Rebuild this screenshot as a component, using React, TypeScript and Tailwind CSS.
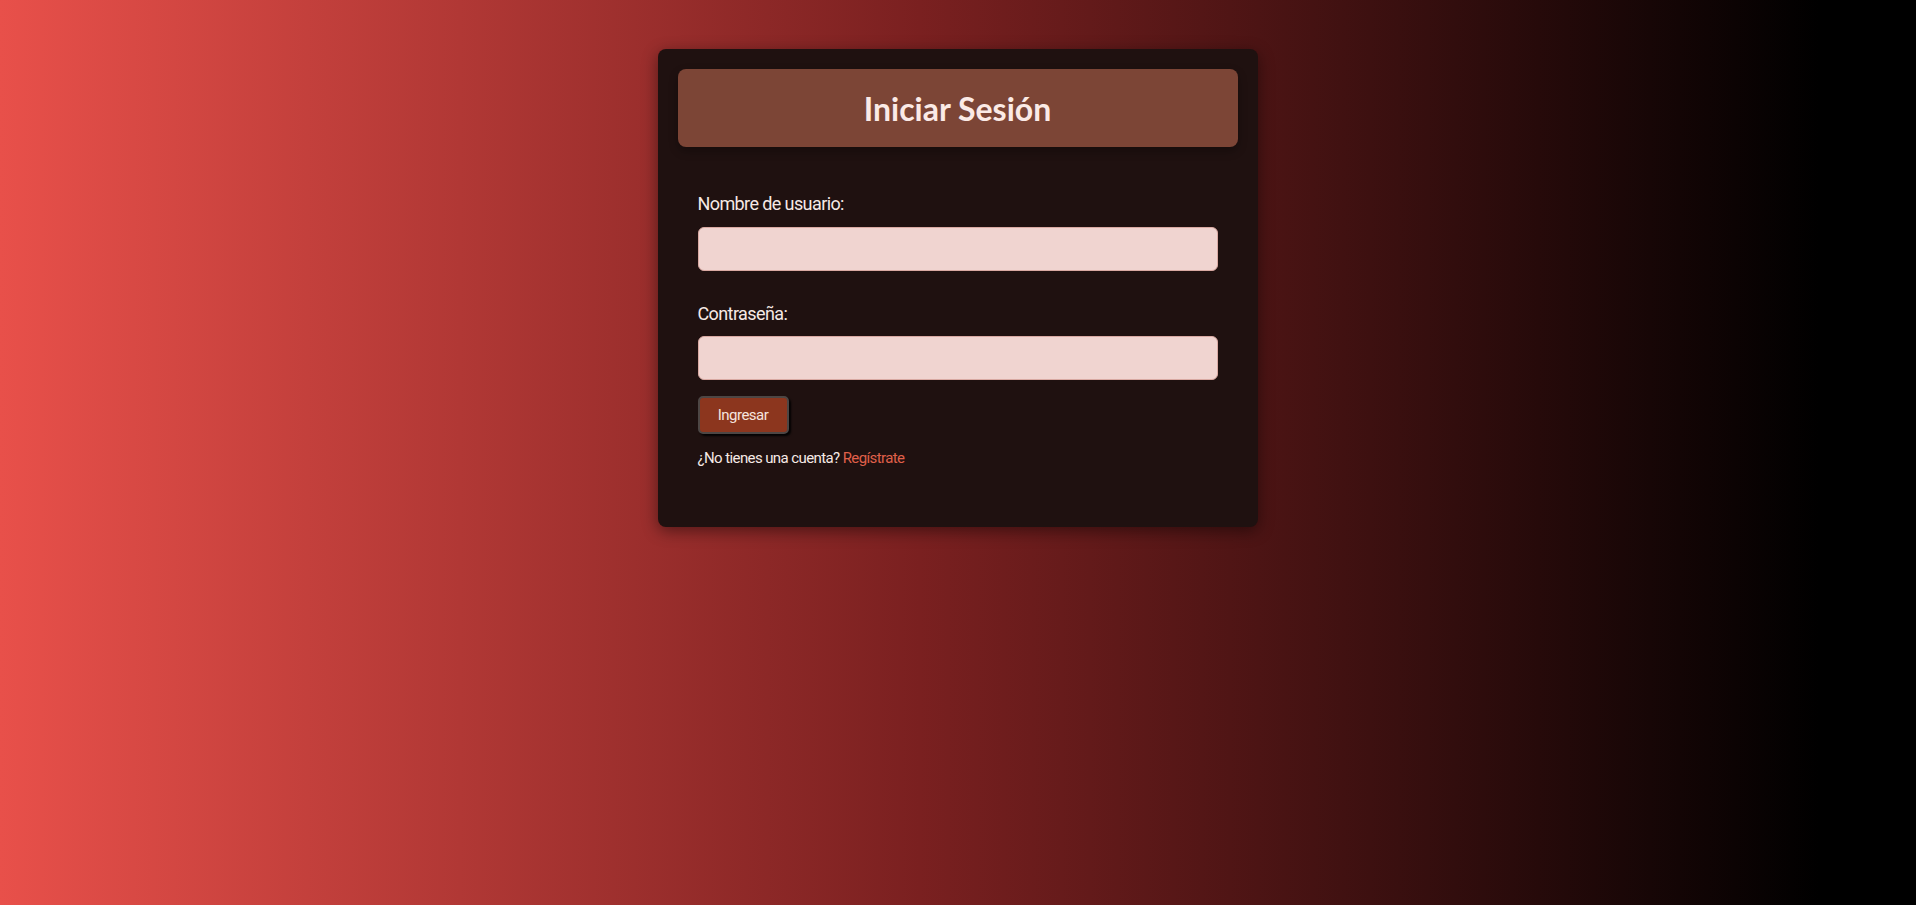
import { useState } from "react";

const LoginCard = () => {
  const [user, setUser] = useState("");
  const [pass, setPass] = useState("");

  return (
    <div className="w-[600px] bg-[#1f1110] rounded-lg p-5 pb-[59px] shadow-[0_4px_16px_rgba(0,0,0,0.45)]">
      {/* Header */}
      <div className="h-[78px] rounded-lg bg-[#7c4536] flex items-center justify-center shadow-[0_4px_10px_rgba(0,0,0,0.3)]">
        <h1 className="text-[32px] font-bold text-[#fbeae6] font-['Lato',sans-serif] translate-y-[1px]">Iniciar Sesión</h1>
      </div>

      {/* Form */}
      <form className="px-5 pt-[45px] font-['Roboto',sans-serif]" onSubmit={(e) => e.preventDefault()}>
        <label className="block text-[18px] leading-[24px] tracking-[-0.6px] text-[#f6e9e5] mb-[11px]">Nombre de usuario:</label>
        <input
          type="text"
          value={user}
          onChange={(e) => setUser(e.target.value)}
          className="block w-full h-[44px] rounded-md bg-[#f0d4d0] border border-[#d9a9a2] px-3 outline-none"
        />

        <label className="block text-[18px] leading-[24px] tracking-[-0.6px] text-[#f6e9e5] mt-[31px] mb-[10px]">Contraseña:</label>
        <input
          type="password"
          value={pass}
          onChange={(e) => setPass(e.target.value)}
          className="block w-full h-[44px] rounded-md bg-[#f0d4d0] border border-[#d9a9a2] px-3 outline-none"
        />

        <button
          type="submit"
          className="block mt-[16px] w-[91px] h-[38px] rounded-[5px] bg-[#8c361e] border-2 border-[#4d4644] text-[15px] tracking-[-0.5px] text-[#f6e4de] shadow-[2px_2px_2px_rgba(0,0,0,0.9)]"
        >
          Ingresar
        </button>

        <p className="mt-[14px] text-[15px] leading-[20px] tracking-[-0.6px] text-[#f6e9e5]">
          ¿No tienes una cuenta? <a href="#" className="text-[#e0604a]">Regístrate</a>
        </p>
      </form>
    </div>
  );
};

export default function App() {
  return (
    <div className="min-h-screen w-full bg-[linear-gradient(to_right,#e8504a_0%,#7a2020_48%,#000_95%)] flex justify-center pt-[49px]">
      <div className="ml-[-1px]">
        <LoginCard />
      </div>
    </div>
  );
}
